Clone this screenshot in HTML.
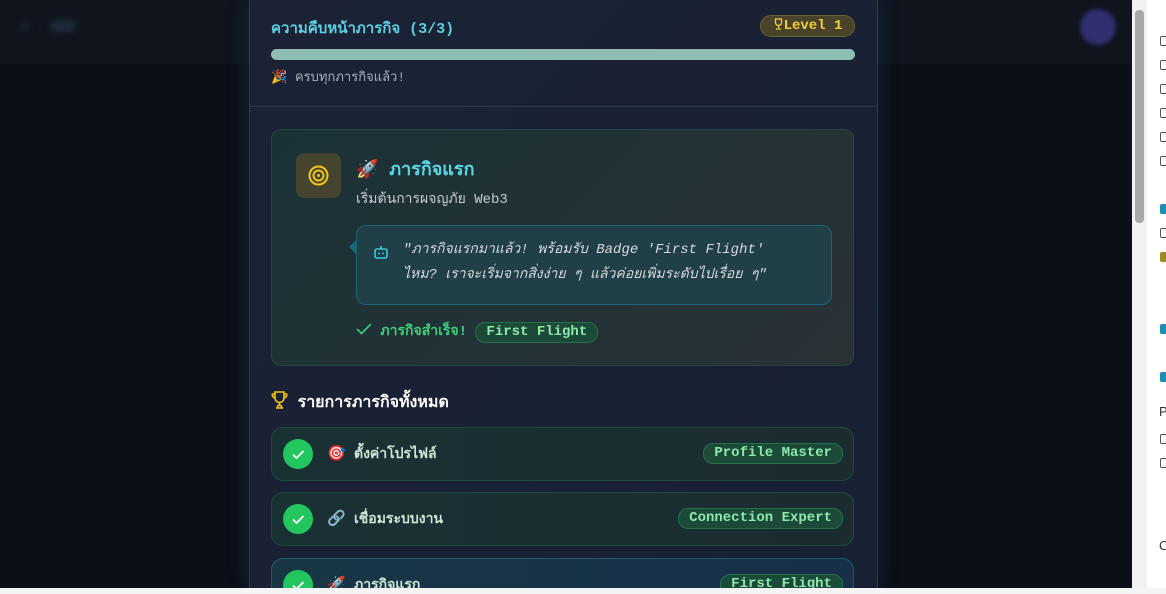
<!DOCTYPE html>
<html><head><meta charset="utf-8"><style>
*{box-sizing:border-box;margin:0;padding:0}
html,body{width:1166px;height:594px;overflow:hidden}
body{background:#0b0f17;font-family:"Liberation Mono","Noto Sans CJK SC",monospace;position:relative}
.hdr{position:absolute;left:0;top:0;width:1132px;height:64px;background:#0f141d}
.blur1{position:absolute;left:20px;top:22px;width:10px;height:10px;border-radius:50%;background:#182330;filter:blur(3px)}
.blur2{position:absolute;left:50px;top:20px;width:26px;height:12px;border-radius:8px;background:#1c2b3a;filter:blur(3px)}
.av{position:absolute;left:1080px;top:9px;width:36px;height:36px;border-radius:50%;background:#302f70;filter:blur(2px)}
.modal{position:absolute;left:249px;top:0;width:629px;height:588px;overflow:hidden;background:linear-gradient(135deg,#1b2236,#182033);border-left:1px solid #2a3a50;border-right:1px solid #2a3a50;box-shadow:0 0 20px rgba(40,120,160,.25)}
.t1{position:absolute;left:21px;top:16px;color:#5ad0e0;font-weight:bold;font-size:15px}
.lvl{position:absolute;left:510px;top:15px;width:95px;height:22px;border-radius:11px;background:#48432a;border:1px solid #6b6232;color:#f2cf3c;font-weight:bold;font-size:14px;text-align:center;line-height:20px}
.bar{position:absolute;left:21px;top:49px;width:584px;height:11px;border-radius:6px;background:#8fbfb3}
.done{position:absolute;left:21px;top:66px;color:#a8b0bc;font-size:13px}
.div{position:absolute;left:0;top:106px;width:629px;height:1px;background:#2e3a4e}
.card{position:absolute;left:21px;top:129px;width:583px;height:237px;border-radius:10px;border:1px solid #22493f;background:linear-gradient(135deg,#1a3236,#2a3236)}
.ib{position:absolute;left:24px;top:23px;width:45px;height:45px;border-radius:8px;background:#45452f}
.ct{position:absolute;left:84px;top:24px;color:#5ad8e6;font-weight:bold;font-size:18px}
.cs{position:absolute;left:84px;top:58px;color:#c8ccd2;font-size:14px}
.bub{position:absolute;left:84px;top:95px;width:476px;height:80px;border-radius:10px;border:1px solid #1a6676;background:#213f46;color:#d4dade;font-style:italic;font-size:14px;line-height:25px;padding:12px 0 0 46px}
.bub:before{content:"";position:absolute;left:-8px;top:14px;border:7px solid transparent;border-right-color:#1a6676;border-left:0}
.ok{position:absolute;left:84px;top:190px;color:#3fce7a;font-size:14px;font-weight:bold}
.pill{display:inline-block;border-radius:10px;background:#1c4a38;border:1px solid #23704a;color:#8ee8ac;font-weight:bold;font-size:14px;padding:0 10px;line-height:19px}
.lh{position:absolute;left:21px;top:390px;color:#fff;font-weight:bold;font-size:16px}
.item{position:absolute;left:21px;width:583px;height:54px;border-radius:12px;border:1px solid #1f4a3e;background:linear-gradient(90deg,#1a3134,#1b2c30)}
.chk{position:absolute;left:11px;top:11px;width:30px;height:30px;border-radius:50%;background:#22c55e}
.em{position:absolute;left:55px;top:16px;font-size:15px}
.nm{position:absolute;left:82px;top:15px;color:#cfe6d6;font-size:14px;font-weight:bold}
.item .pill{position:absolute;right:10px;top:15px}
.side{position:absolute;left:1132px;top:0;width:34px;height:588px;background:#fff;border-left:1px solid #ddd}
.sb{position:absolute;left:1132px;top:0;width:15px;height:588px;background:#f1f1f1}
.th{position:absolute;left:3px;top:10px;width:9px;height:213px;background:#a8a8a8;border-radius:4px}
.bot{position:absolute;left:0;top:588px;width:1166px;height:6px;background:#f4f4f4}
.ic{position:absolute;left:1160px;width:8px;height:10px;border:1px solid #555;border-radius:2px}
</style></head><body>
<div class="hdr"><div class="blur1"></div><div class="blur2"></div><div class="av"></div></div>
<div class="modal">
<div class="t1">ความคืบหน้าภารกิจ (3/3)</div>
<div class="lvl"><svg width="11" height="12" viewBox="0 0 11 12" style="vertical-align:-1px"><path d="M2.5 1h6v3.5a3 3 0 0 1-6 0z M5.5 7.5v2.5 M3 11h5" fill="none" stroke="#f2cf3c" stroke-width="1.3"/></svg>Level 1</div>
<div class="bar"></div>
<div class="done">🎉 ครบทุกภารกิจแล้ว!</div>
<div class="div"></div>
<div class="card">
<div class="ib"><svg width="45" height="45"><circle cx="22.5" cy="22.5" r="9" fill="none" stroke="#f5c518" stroke-width="2"/><circle cx="22.5" cy="22.5" r="5" fill="none" stroke="#f5c518" stroke-width="2"/><circle cx="22.5" cy="22.5" r="1.5" fill="#f5c518"/></svg></div>
<div class="ct">🚀 ภารกิจแรก</div>
<div class="cs">เริ่มต้นการผจญภัย Web3</div>
<div class="bub"><svg style="position:absolute;left:16px;top:18px" width="16" height="16" viewBox="0 0 16 16"><rect x="2" y="5" width="12" height="9" rx="2" fill="none" stroke="#3cc8e0" stroke-width="1.6"/><path d="M8 5V2" stroke="#3cc8e0" stroke-width="1.6"/><circle cx="6" cy="9.5" r="1" fill="#3cc8e0"/><circle cx="10" cy="9.5" r="1" fill="#3cc8e0"/></svg>"ภารกิจแรกมาแล้ว! พร้อมรับ Badge 'First Flight'<br>ไหม? เราจะเริ่มจากสิ่งง่าย ๆ แล้วค่อยเพิ่มระดับไปเรื่อย ๆ"</div>
<div class="ok"><svg width="16" height="12" viewBox="0 0 16 12" style="vertical-align:0"><path d="M1 6l4.5 4.5L15 1" fill="none" stroke="#3fce7a" stroke-width="1.6"/></svg> ภารกิจสำเร็จ! <span class="pill">First Flight</span></div>
</div>
<div class="lh"><svg width="17" height="18" viewBox="0 0 17 18" style="vertical-align:-2px"><path d="M4 1h9v6a4.5 4.5 0 0 1-9 0z M4 3H1.5a3 3 0 0 0 3 4 M13 3h2.5a3 3 0 0 1-3 4 M8.5 11.5v3 M5 17h7 M6 17l1-2.5h3l1 2.5" fill="none" stroke="#f5c518" stroke-width="1.6"/></svg> รายการภารกิจทั้งหมด</div>
<div class="item" style="top:427px"><div class="chk"><svg width="30" height="30"><path d="M10 15.5l3.5 3.5 7-7" fill="none" stroke="#fff" stroke-width="1.8"/></svg></div><div class="em">🎯</div><div class="nm">ตั้งค่าโปรไฟล์</div><span class="pill">Profile Master</span></div>
<div class="item" style="top:492px"><div class="chk"><svg width="30" height="30"><path d="M10 15.5l3.5 3.5 7-7" fill="none" stroke="#fff" stroke-width="1.8"/></svg></div><div class="em">🔗</div><div class="nm">เชื่อมระบบงาน</div><span class="pill">Connection Expert</span></div>
<div class="item" style="top:558px;background:linear-gradient(90deg,#183644,#17304a);border-color:#1f5a6a"><div class="chk"><svg width="30" height="30"><path d="M10 15.5l3.5 3.5 7-7" fill="none" stroke="#fff" stroke-width="1.8"/></svg></div><div class="em">🚀</div><div class="nm">ภารกิจแรก</div><span class="pill">First Flight</span></div>
</div>
<div class="side"></div>
<div class="sb"><div class="th"></div></div>
<div class="ic" style="top:36px"></div><div class="ic" style="top:60px"></div><div class="ic" style="top:84px"></div><div class="ic" style="top:108px"></div><div class="ic" style="top:132px"></div><div class="ic" style="top:156px"></div>
<div class="ic" style="top:204px;background:#1a8fb0;border-color:#1a8fb0"></div><div class="ic" style="top:228px"></div><div class="ic" style="top:252px;background:#a08a20;border-color:#a08a20"></div>
<div class="ic" style="top:324px;background:#1a8fb0;border-color:#1a8fb0"></div><div class="ic" style="top:372px;background:#1a8fb0;border-color:#1a8fb0"></div>
<div class="ic" style="top:434px"></div><div class="ic" style="top:458px"></div>
<div style="position:absolute;left:1159px;top:404px;font-size:13px;color:#333;font-family:'Liberation Sans',sans-serif">P</div>
<div style="position:absolute;left:1159px;top:538px;font-size:13px;color:#333;font-family:'Liberation Sans',sans-serif">C</div>
<div class="bot"></div>
</body></html>
